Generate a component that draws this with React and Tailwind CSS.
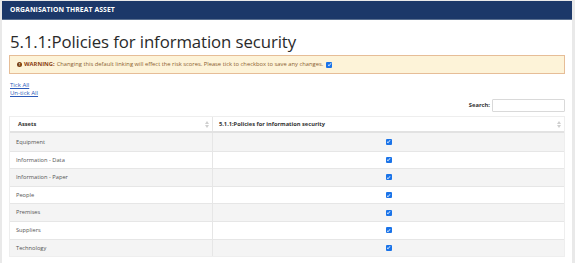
import React from "react";

const font = { fontFamily: '"Open Sans", "DejaVu Sans", sans-serif' };

function Check() {
  return (
    <span className="inline-flex items-center justify-center w-[6px] h-[6px] bg-[#1a73e8] rounded-[1px] align-middle">
      <svg width="5" height="5" viewBox="0 0 10 10">
        <path d="M2 5.5 L4.2 7.5 L8 2.5" stroke="white" strokeWidth="1.8" fill="none" />
      </svg>
    </span>
  );
}

function Sort() {
  return (
    <svg width="4" height="7" viewBox="0 0 4 7" className="opacity-40">
      <path d="M2 0 L4 3 L0 3 Z" fill="#888" />
      <path d="M2 7 L4 4 L0 4 Z" fill="#888" />
    </svg>
  );
}

const rows = [
  "Equipment",
  "Information - Data",
  "Information - Paper",
  "People",
  "Premises",
  "Suppliers",
  "Technology",
];

export default function App() {
  return (
    <div className="w-[575px] h-[263px] bg-[#e9e9e9] pt-[1px] pl-[2px] pr-[3px] overflow-hidden" style={font}>
      <div className="bg-white h-full">
        <div className="h-[19px] bg-[#1c3869] flex items-center pl-[8px] border-b border-[#5a6f8f]">
          <span className="text-white text-[6.8px] font-bold tracking-[0.1px]">ORGANISATION THREAT ASSET</span>
        </div>
        <div className="px-[7px]">
          <h1 className="text-[#2a2a2a] text-[16.8px] leading-[22px] mt-[11px] ml-[1px] tracking-[-0.1px]">5.1.1:Policies for information security</h1>
          <div className="mt-[2px] h-[19px] bg-[#fdf3d8] border border-[#e6bd97] flex items-center pl-[7px] text-[5.8px] text-[#8a5e30]">
            <span className="w-[5px] h-[5px] rounded-full bg-[#7a3f10] text-white text-[4px] font-bold flex items-center justify-center mr-[2px]">!</span>
            <span className="font-bold text-[#8b3e12] mr-[2px]">WARNING:</span>
            <span>Changing this default linking will effect the risk scores. Please tick to checkbox to save any changes.</span>
            <span className="ml-[3px] flex"><Check /></span>
          </div>
          <div className="mt-[7px] ml-[1px] flex flex-col text-[6px] leading-[8px] text-[#2c5ab8] underline">
            <span>Tick All</span>
            <span>Un-tick All</span>
          </div>
          <div className="flex justify-end items-center mt-[2px] text-[5.8px] text-[#333] font-bold">
            <span className="mr-[2px]">Search:</span>
            <div className="w-[73px] h-[13px] border border-[#d9d9d9] bg-white rounded-[1px]" />
          </div>
          <div className="mt-[4px] border border-[#eeeeee] text-[5.7px]">
            <div className="h-[16px] flex items-center border-b-2 border-[#e2e2e2] font-bold text-[#333]">
              <div className="w-[203px] h-full flex items-center justify-between pl-[8px] pr-[3px] border-r border-[#e6e6e6]">
                <span>Assets</span>
                <Sort />
              </div>
              <div className="flex-1 h-full flex items-center justify-between pl-[6px] pr-[3px]">
                <span>5.1.1:Policies for information security</span>
                <Sort />
              </div>
            </div>
            {rows.map((r, i) => (
              <div
                key={r}
                className={`h-[17.6px] flex items-center text-[#555] ${i > 0 ? "border-t border-[#e6e6e6]" : ""} ${i % 2 === 0 ? "bg-[#f4f4f4]" : "bg-white"}`}
              >
                <div className="w-[203px] h-full flex items-center pl-[6px] border-r border-[#e6e6e6]">{r}</div>
                <div className="flex-1 h-full flex items-center justify-center">
                  <Check />
                </div>
              </div>
            ))}
          </div>
        </div>
      </div>
    </div>
  );
}
